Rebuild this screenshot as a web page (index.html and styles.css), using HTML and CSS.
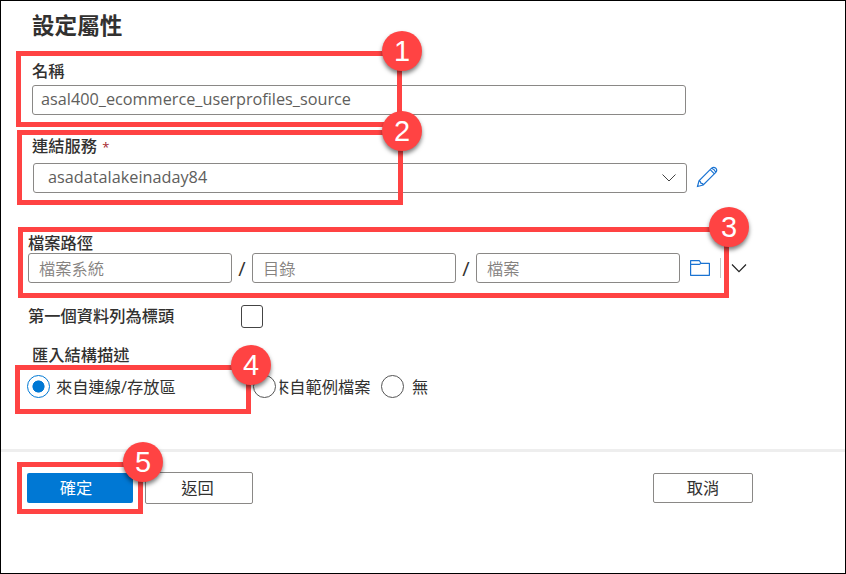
FILE: index.html
```html
<!DOCTYPE html>
<html lang="zh-Hant">
<head>
<meta charset="utf-8">
<title>設定屬性</title>
<link rel="stylesheet" href="styles.css">
</head>
<body>
<div class="panel">
  <main class="form">
    <h1 class="title">設定屬性</h1>

    <section class="field name">
      <div class="label">名稱</div>
      <div class="box value"><span class="name-text">asal400_ecommerce_userprofiles_source</span></div>
    </section>

    <section class="field linked">
      <div class="label">連結服務 <span class="required">*</span></div>
      <div class="linked-row">
        <div class="box select"><span class="service-text">asadatalakeinaday84</span>
          <svg class="chevron" width="16" height="10" viewBox="0 0 16 10"><path d="M1.500 1.500 8 8 14.500 1.500" fill="none" stroke="#444" stroke-width="1"/></svg>
        </div>
        <svg class="pencil" width="22" height="22" viewBox="0 0 22 22"><path d="M1.500 20.500 3 14.800 15.600 2.200Q17.700.400 19.800 2.200 21.600 4.300 19.800 6.400L7.200 19ZM3 14.800Q4.600 14.800 4.900 17.100 7.200 17.400 7.200 19M14.200 3.600 18.400 7.800M15.600 2.200Q18.800 3.200 19.800 6.400" fill="none" stroke="#1a73d2" stroke-width="1.200"/></svg>
      </div>
    </section>

    <section class="field path">
      <div class="label">檔案路徑</div>
      <div class="path-row">
        <div class="box hint">檔案系統</div><span class="slash">/</span>
        <div class="box hint">目錄</div><span class="slash">/</span>
        <div class="box hint">檔案</div>
        <svg class="folder" width="20" height="16" viewBox="0 0 20 16"><path d="M.600 15.300V.700H9.400L11 3.300H19.400V15.300ZM.600 4.300H9.600L11 3.300" fill="none" stroke="#1a73d2" stroke-width="1.200" stroke-linejoin="round"/></svg>
        <span class="rule"></span>
        <svg class="more" width="16" height="10" viewBox="0 0 16 10"><path d="M1 1.500 8 8.700 15 1.500" fill="none" stroke="#222" stroke-width="1.200"/></svg>
      </div>
    </section>

    <section class="header-row">
      <div class="label">第一個資料列為標頭</div>
      <span class="checkbox"></span>
    </section>

    <section class="schema">
      <div class="label">匯入結構描述</div>
      <div class="radios">
        <div class="option first"><span class="radio on"></span><span>來自連線/存放區</span></div>
        <div class="option second"><span class="radio"></span><span class="tucked">來自範例檔案</span></div>
        <div class="option third"><span class="radio"></span><span>無</span></div>
      </div>
    </section>
  </main>
  <footer class="actions">
    <div class="button primary">確定</div>
    <div class="button back">返回</div>
    <div class="button cancel">取消</div>
  </footer>

  <div class="callout c1"><span class="badge">1</span></div>
  <div class="callout c2"><span class="badge">2</span></div>
  <div class="callout c3"><span class="badge">3</span></div>
  <div class="callout c4"><span class="badge">4</span></div>
  <div class="callout c5"><span class="badge">5</span></div>
</div>
</body>
</html>
```
FILE: styles.css
```css
* { box-sizing: border-box; }
body {
  margin: 0;
  font: 16.25px/20px "Open Sans", "Noto Sans CJK TC", sans-serif;
  color: #323130;
  background: #fff;
}
.panel {
  position: relative;
  width: 846px;
  height: 574px;
  border: 1px solid #000;
  overflow: hidden;
}
.form { height: 448px; padding: 10px 0 0 27px; }
.title {
  margin: 0 0 0 4px;
  font-size: 22.6px;
  line-height: 30px;
  font-weight: 700;
}
.label { height: 20px; font-weight: 500; white-space: nowrap; }
.box {
  display: flex;
  align-items: center;
  height: 30px;
  border: 1px solid #8a8886;
  border-radius: 3px;
  background: #fff;
  white-space: nowrap;
}
.value, .select { width: 654px; color: #605e5c; }
.value { padding: 0 0 2px 8px; }
.name { margin: 20px 0 0 4px; }
.name .label { height: 24px; }
.linked { margin: 21px 0 0 4px; }
.linked .label { height: 27px; }
.required { margin-left: 1px; color: #a4262c; font-weight: 400; font-size: 13px; }
.linked-row { display: flex; align-items: center; margin-left: 1px; }
.select { justify-content: space-between; padding: 0 9px 0 14px; }
.service-text { padding-bottom: 2px; }
.pencil { margin: 0 0 2px 9px; }
.path { margin-top: 40px; }
.path .label { height: 20px; }
.path-row { display: flex; align-items: center; }
.hint { width: 204px; padding: 1px 0 0 10px; color: #85827f; font-weight: 350; }
.slash { width: 20px; padding-top: 2px; text-align: center; font-size: 20px; }
.folder { margin-left: 10px; }
.rule { width: 1px; height: 20px; margin: 0 10px; background: #c8c6c4; }
.header-row { display: flex; align-items: center; height: 24px; margin-top: 21px; }
.header-row .label { width: 213px; }
.checkbox {
  width: 22px;
  height: 23px;
  border: 1px solid #444;
  border-radius: 3px;
}
.schema { margin-top: 17px; }
.schema .label { margin-left: 4px; }
.radios { display: flex; align-items: center; height: 24px; margin: 9px 0 0 -1px; }
.option { display: flex; align-items: center; gap: 6px; white-space: nowrap; }
.option span:last-child { padding-top: 2px; }
.first { width: 226px; }
.second { width: 128px; gap: 0; }
.third { gap: 8px; }
.tucked { margin-left: -3px; }
.radio {
  flex: none;
  width: 23px;
  height: 23px;
  border: 1px solid #555;
  border-radius: 50%;
  background: #fff;
}
.second .radio { position: relative; box-shadow: 0 0 0 4px #fff; }
.radio.on {
  border-color: #0078d4;
  background: radial-gradient(circle, #0078d4 5.700px, #fff 6.400px);
}
.actions {
  display: flex;
  align-items: center;
  height: 77px;
  padding: 0 0 3px 26px;
  border-top: 3px solid #eee;
}
.button {
  display: flex;
  align-items: center;
  justify-content: center;
  width: 100px;
  height: 30px;
  border: 1px solid #8a8886;
  border-radius: 2px;
}
.primary { width: 106px; border: 0; background: #0078d4; color: #fff; padding: 1px 8px 0 0; }
.back { width: 108px; height: 32px; margin-left: 12px; padding-right: 3px; }
.cancel { margin-left: 400px; }

/* Numbered step markers over the form */
.callout { position: absolute; border: 5px solid #ff4343; }
.c1 { left: 15px; top: 50px; width: 386px; height: 76px; }
.c2 { left: 16px; top: 129px; width: 386px; height: 75px; }
.c3 { left: 17px; top: 226px; width: 711px; height: 71px; }
.c4 { left: 14px; top: 364px; width: 236px; height: 49px; }
.c5 { left: 16px; top: 461px; width: 126px; height: 52px; }
.badge {
  position: absolute;
  top: -25px;
  right: -25px;
  width: 40px;
  height: 40px;
  border-radius: 50%;
  background: #ff4343;
  color: #fff;
  font: 29px/41px "Liberation Sans", sans-serif;
  text-align: center;
  box-shadow: 0 3px 4px rgba(0, 0, 0, .5);
}
.c2 .badge { top: -24px; right: -24px; }
```
